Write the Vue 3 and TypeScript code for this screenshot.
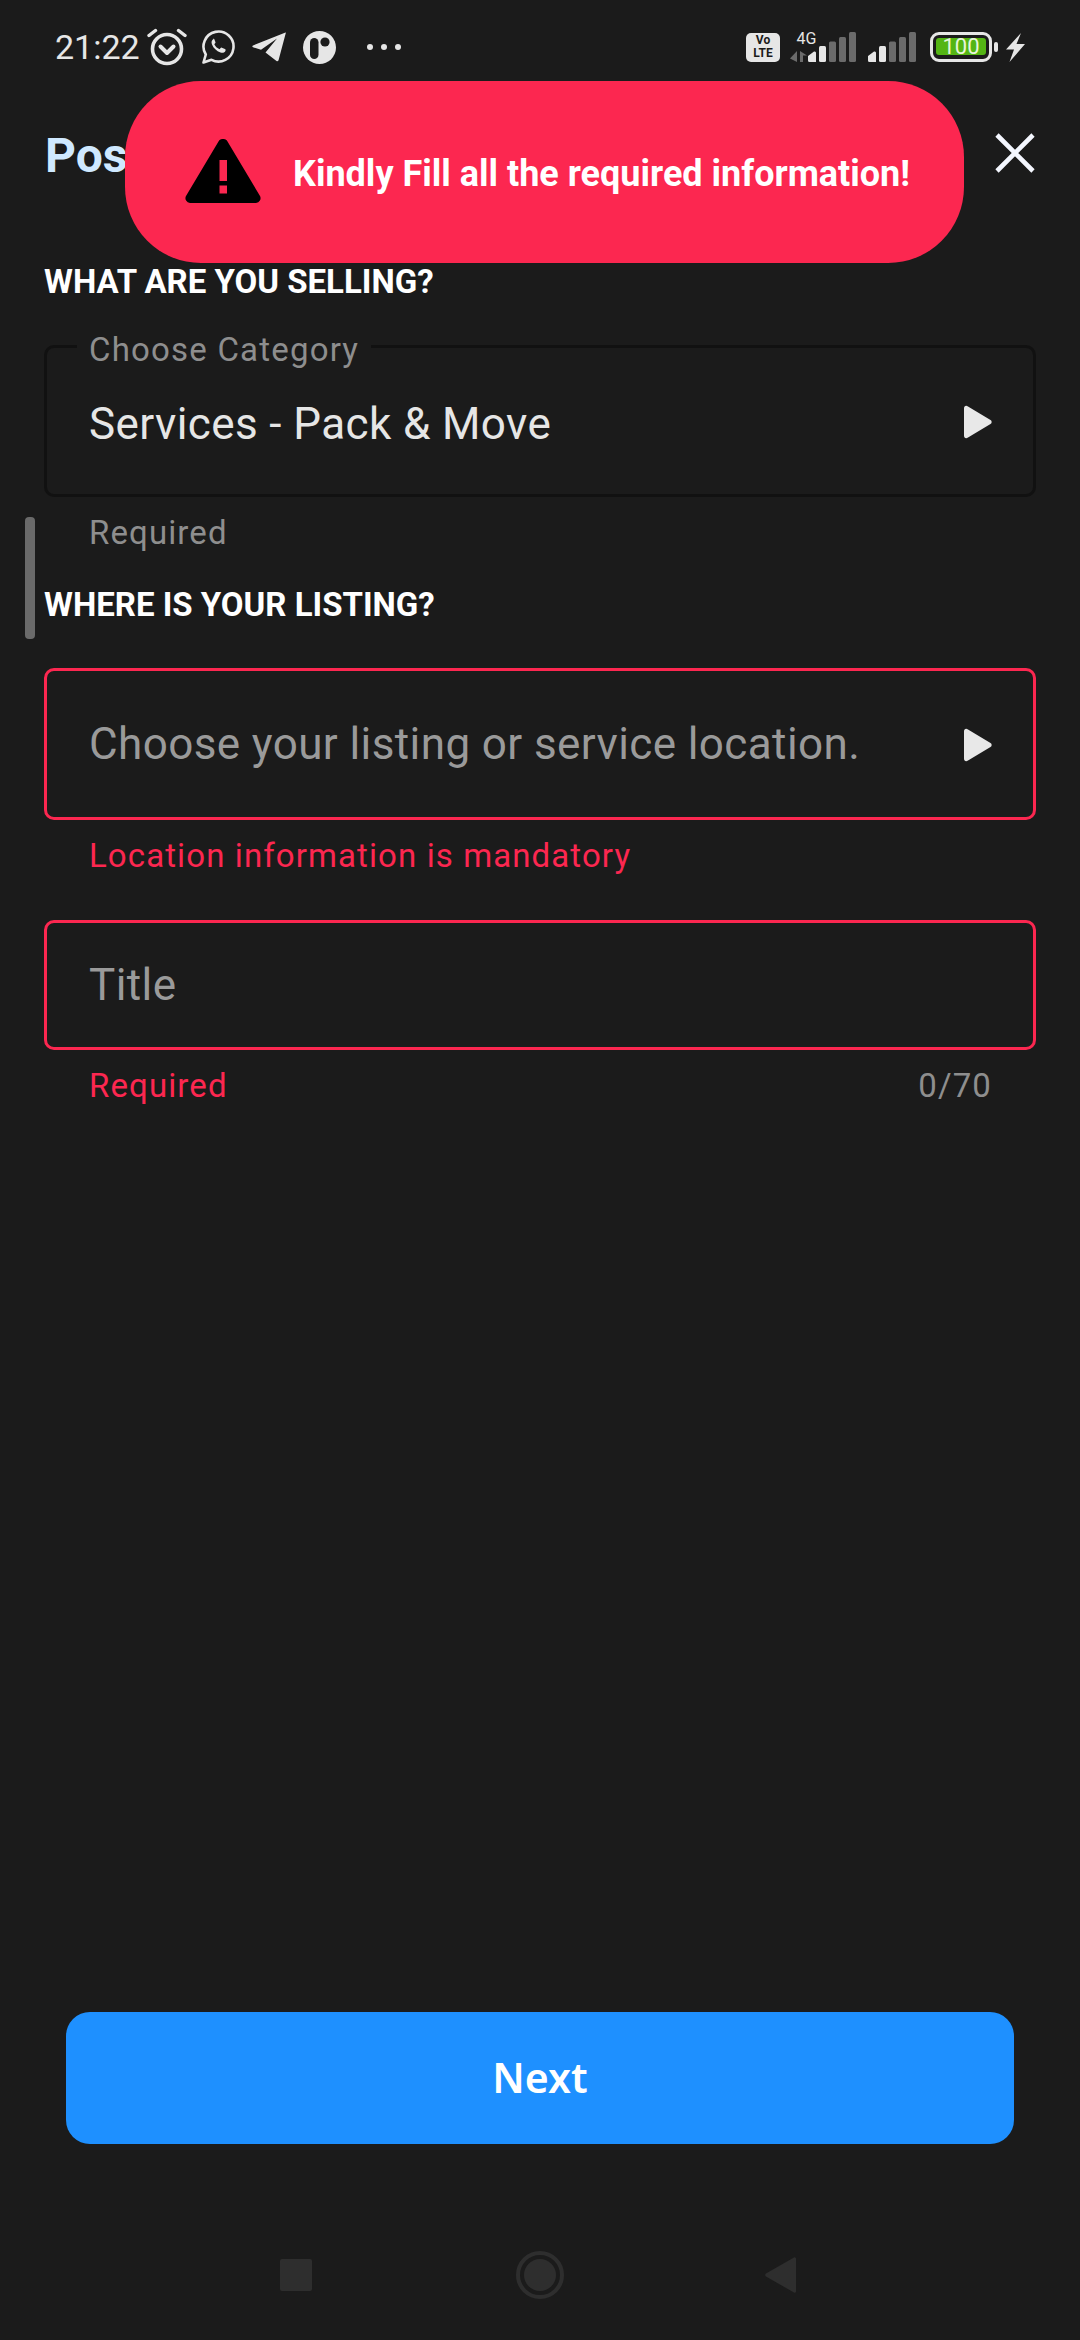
<template>
  <div class="screen">
    <div class="status-bar">
      <span class="time">21:22</span>
      <svg class="st-alarm" width="40" height="38" viewBox="0 0 40 38" fill="none" stroke="#e6e6e6" stroke-linecap="round">
        <circle cx="20" cy="21" r="14.5" stroke-width="3.6"/>
        <path d="M2 7.500 8.500 2.500M38 7.500 31.500 2.500" stroke-width="3.4"/>
        <path d="M13.500 18.500 20 25l6.500-6.500" stroke-width="4" stroke-linejoin="round"/>
      </svg>
      <svg class="st-whatsapp" width="33" height="34" viewBox="0 0 33 34" fill="none">
        <path d="M1.500 32.500 3.800 24.500A15 15 0 1 1 9.500 29.800Z" stroke="#e6e6e6" stroke-width="2.6" stroke-linejoin="round"/>
        <path d="M11.500 9c-1.800 1-2.500 3-1.500 5.500 1.500 3.800 4.500 6.500 8.500 8 2.300.8 4.300 0 5-1.800.3-.8 0-1.300-.6-1.600l-3-1.400c-.6-.2-1 0-1.300.4l-1 1.200c-2.500-1-4.300-2.800-5.300-5l1-1.200c.3-.4.300-.8.100-1.200l-1.200-2.900c-.2-.5-.8-.8-.7-.4Z" fill="#e6e6e6"/>
      </svg>
      <svg class="st-telegram" width="34" height="30" viewBox="0 0 34 30">
        <path d="M33.500.5 1 13.500c-1 .5-.9 1.300 0 1.700l8 2.500L25 6.500 13.500 20.500l11 8.500c1 .6 1.900.2 2.100-.9L33.800 1c.1-.5-.1-.7-.3-.5Z" fill="#e6e6e6"/>
      </svg>
      <svg class="st-app" width="33" height="33" viewBox="0 0 33 33">
        <circle cx="16.500" cy="16.500" r="16.500" fill="#e6e6e6"/>
        <rect x="7" y="7" width="8.500" height="21" rx="4.250" fill="#1b1b1b"/>
        <circle cx="22" cy="11" r="4.600" fill="#1b1b1b"/>
      </svg>
      <div class="st-dots"><i></i><i></i><i></i></div>
      <div class="st-right">
        <div class="st-volte"><span>Vo</span><span>LTE</span></div>
        <div class="st-net">
          <span class="st-4g">4G</span>
          <svg class="st-arrows" width="17" height="11" viewBox="0 0 17 11">
            <path d="M7 0V11L0 7.500Z" fill="#6b6b6b"/>
            <path d="M10 0 17 4.500H13V11H10Z" fill="#6b6b6b"/>
          </svg>
        </div>
        <svg class="st-bars" width="48" height="30" viewBox="0 0 48 30">
          <path d="M0 24 6 19.500a1.500 1.500 0 0 1 2 1.500V30H1.500A1.500 1.500 0 0 1 0 28.500Z" fill="#e6e6e6"/>
          <rect x="11" y="14" width="7" height="16" rx="1.5" fill="#e6e6e6"/>
          <rect x="21" y="9.500" width="7" height="20.500" rx="1.5" fill="#6b6b6b"/>
          <rect x="31" y="5" width="7" height="25" rx="1.5" fill="#6b6b6b"/>
          <rect x="41" y="0" width="7" height="30" rx="1.5" fill="#6b6b6b"/>
        </svg>
        <svg class="st-bars st-bars2" width="48" height="30" viewBox="0 0 48 30">
          <path d="M0 24 6 19.500a1.500 1.500 0 0 1 2 1.500V30H1.500A1.500 1.500 0 0 1 0 28.500Z" fill="#e6e6e6"/>
          <rect x="11" y="14" width="7" height="16" rx="1.5" fill="#e6e6e6"/>
          <rect x="21" y="9.500" width="7" height="20.500" rx="1.5" fill="#6b6b6b"/>
          <rect x="31" y="5" width="7" height="25" rx="1.5" fill="#6b6b6b"/>
          <rect x="41" y="0" width="7" height="30" rx="1.5" fill="#6b6b6b"/>
        </svg>
        <div class="st-battery"><span>100</span></div>
        <i class="st-nub"></i>
        <svg class="st-bolt" width="19" height="29" viewBox="0 0 19 29">
          <path d="M15 0 0 16.500H8L3.500 29 19 11H10.500Z" fill="#e6e6e6"/>
        </svg>
      </div>
    </div>

    <div class="scroll-thumb"></div>

    <div class="toast">
      <svg class="toast-icon" width="76" height="64" viewBox="0 0 76 64">
        <path d="M33.500 2.500a5.200 5.200 0 0 1 9 0L75 57a4.800 4.800 0 0 1-4 7H5a4.800 4.800 0 0 1-4-7Z" fill="#000"/>
        <rect x="34.500" y="21" width="7.500" height="21" fill="#fc2750"/>
        <rect x="34.500" y="46.500" width="7.500" height="8" fill="#fc2750"/>
      </svg>
      <span class="toast-text">Kindly Fill all the required information!</span>
    </div>

    <header class="header">
      <h1>Post</h1>
      <svg class="close" width="40" height="40" viewBox="0 0 40 40" stroke="#f4f7ff" stroke-width="4.6" fill="none">
        <path d="M2 2 38 38M38 2 2 38"/>
      </svg>
    </header>

    <main class="form">
      <h2 class="heading">WHAT ARE YOU SELLING?</h2>
      <div class="field field-select">
        <span class="float-label">Choose Category</span>
        <span class="value">Services - Pack &amp; Move</span>
        <svg class="arrow" width="30" height="34" viewBox="0 0 30 34"><path d="M1 3.500C1 1 3 0 5 1.500L27.500 15a2.300 2.300 0 0 1 0 4L5 32.500C3 34 1 33 1 30.500Z" fill="#e8e8e8"/></svg>
      </div>
      <div class="helper">Required</div>

      <h2 class="heading heading-second">WHERE IS YOUR LISTING?</h2>
      <div class="field field-select invalid">
        <span class="placeholder">Choose your listing or service location.</span>
        <svg class="arrow" width="30" height="34" viewBox="0 0 30 34"><path d="M1 3.500C1 1 3 0 5 1.500L27.500 15a2.300 2.300 0 0 1 0 4L5 32.500C3 34 1 33 1 30.500Z" fill="#e8e8e8"/></svg>
      </div>
      <div class="helper error">Location information is mandatory</div>

      <div class="field field-title invalid">
        <span class="placeholder">Title</span>
      </div>
      <div class="helper helper-row">
        <span class="error">Required</span>
        <span>0/70</span>
      </div>
    </main>

    <button class="next-btn">Next</button>

    <nav class="nav">
      <span class="nav-square"></span>
      <span class="nav-home"></span>
      <svg class="nav-back" width="31" height="36" viewBox="0 0 31 36"><path d="M29 .5a1.300 1.300 0 0 1 2 1V34.500a1.300 1.300 0 0 1-2 1L1 19.500a2 2 0 0 1 0-3Z" fill="#2e2e2e"/></svg>
    </nav>
  </div>
</template>

<script setup lang="ts">
</script>

<style>
body { background: #1b1b1b; }
</style>

<style scoped>
.screen {
  position: relative;
  width: 1080px;
  height: 2340px;
  display: flex;
  flex-direction: column;
  background: #1b1b1b;
  font-family: Roboto, "Noto Sans", sans-serif;
  overflow: hidden;
}

.status-bar {
  height: 94px;
  display: flex;
  align-items: center;
  padding: 0 55px;
  box-sizing: border-box;
  color: #e6e6e6;
  flex-shrink: 0;
}
.time { width: 92px; font-size: 34px; line-height: 40px; }
.st-alarm { margin-right: 15px; }
.st-whatsapp { margin-right: 17px; }
.st-telegram { margin-right: 17px; }
.st-app { margin-right: 31px; }
.st-dots { display: flex; gap: 8px; }
.st-dots i { width: 6px; height: 6px; border-radius: 50%; background: #e6e6e6; }
.st-right { margin-left: auto; display: flex; align-items: center; }
.st-volte {
  width: 34px;
  height: 29px;
  margin-right: 9px;
  background: #e6e6e6;
  border-radius: 5px;
  color: #1b1b1b;
  font-size: 12px;
  font-weight: 700;
  line-height: 13px;
  display: flex;
  flex-direction: column;
  align-items: center;
  justify-content: center;
}
.st-net {
  width: 19px;
  height: 30px;
  display: flex;
  flex-direction: column;
  align-items: center;
  justify-content: space-between;
}
.st-4g { font-size: 16px; line-height: 13px; margin-left: 16px; }
.st-arrows { flex-shrink: 0; }
.st-bars2 { margin-left: 12px; margin-right: 14px; }
.st-battery {
  width: 62px;
  height: 30px;
  box-sizing: border-box;
  border: 3.5px solid #e6e6e6;
  border-radius: 9px;
  padding: 3px;
}
.st-battery span {
  display: block;
  height: 17px;
  background: #54b514;
  border-radius: 3px;
  color: #e8f5dc;
  font-size: 22px;
  line-height: 17px;
  text-align: center;
}
.st-nub { width: 4px; height: 10px; margin: 0 8px 0 2px; background: #e6e6e6; border-radius: 2px; }

.scroll-thumb {
  position: absolute;
  left: 25px;
  top: 517px;
  width: 10px;
  height: 122px;
  background: #6a6a6a;
  border-radius: 4px;
}

.toast {
  position: absolute;
  left: 125px;
  top: 81px;
  width: 839px;
  height: 182px;
  box-sizing: border-box;
  padding-left: 60px;
  display: flex;
  align-items: center;
  gap: 32px;
  background: #fc2750;
  border-radius: 76px;
  z-index: 2;
}
.toast-icon { margin-top: -2px; }
.toast-text {
  color: #fff;
  font-size: 36px;
  font-weight: 700;
  white-space: nowrap;
  margin-top: 4px;
}

.header {
  height: 122px;
  padding: 0 45px;
  display: flex;
  align-items: center;
  justify-content: space-between;
  flex-shrink: 0;
}
.header h1 {
  margin: 0;
  color: #cfe9ff;
  font-size: 48px;
  font-weight: 700;
}
.close { margin-top: -4px; }

.form { padding: 0 44px; }
.heading {
  margin: 48px 0 0;
  color: #fff;
  font-size: 33px;
  font-weight: 700;
  line-height: 36px;
}
.heading-second { margin-top: 34px; }

.field {
  position: relative;
  box-sizing: border-box;
  margin-top: 45px;
  padding: 0 40px 0 42px;
  display: flex;
  align-items: center;
  justify-content: space-between;
  border: 3px solid #111;
  border-radius: 10px;
  font-size: 44px;
  letter-spacing: .4px;
}
.field-select { height: 152px; }
.field-title { height: 130px; margin-top: 44px; }
.field.invalid { border-color: #fc2750; }
.value { color: #e6e6e6; margin-top: 5px; }
.placeholder { color: #9a9a9a; }
.float-label {
  position: absolute;
  left: 30px;
  top: -13px;
  padding: 0 12px;
  background: #1b1b1b;
  color: #8e8e8e;
  font-size: 33px;
  line-height: 30px;
  letter-spacing: 1.2px;
}
.arrow { flex-shrink: 0; margin-top: 2px; }

.helper {
  margin-top: 16px;
  padding: 0 44px 0 45px;
  color: #8e8e8e;
  font-size: 33px;
  line-height: 40px;
  letter-spacing: 1.1px;
}
.error { color: #fc2750; }
.helper-row { display: flex; justify-content: space-between; }

.next-btn {
  margin: auto 66px 0;
  height: 132px;
  border: none;
  border-radius: 24px;
  background: #1e90ff;
  color: #fff;
  font-family: "Noto Sans", sans-serif;
  font-size: 41px;
  font-weight: 600;
  padding-bottom: 4px;
  flex-shrink: 0;
}

.nav {
  height: 196px;
  box-sizing: border-box;
  padding: 66px 0 0 280px;
  display: flex;
  align-items: center;
  flex-shrink: 0;
}
.nav-square { width: 32px; height: 32px; border-radius: 2px; background: #2e2e2e; }
.nav-home {
  position: relative;
  width: 48px;
  height: 48px;
  margin: 0 201px 0 204px;
  box-sizing: border-box;
  border: 4px solid #2e2e2e;
  border-radius: 50%;
}
.nav-home::after {
  content: "";
  position: absolute;
  inset: 4px;
  border-radius: 50%;
  background: #2e2e2e;
}
</style>
